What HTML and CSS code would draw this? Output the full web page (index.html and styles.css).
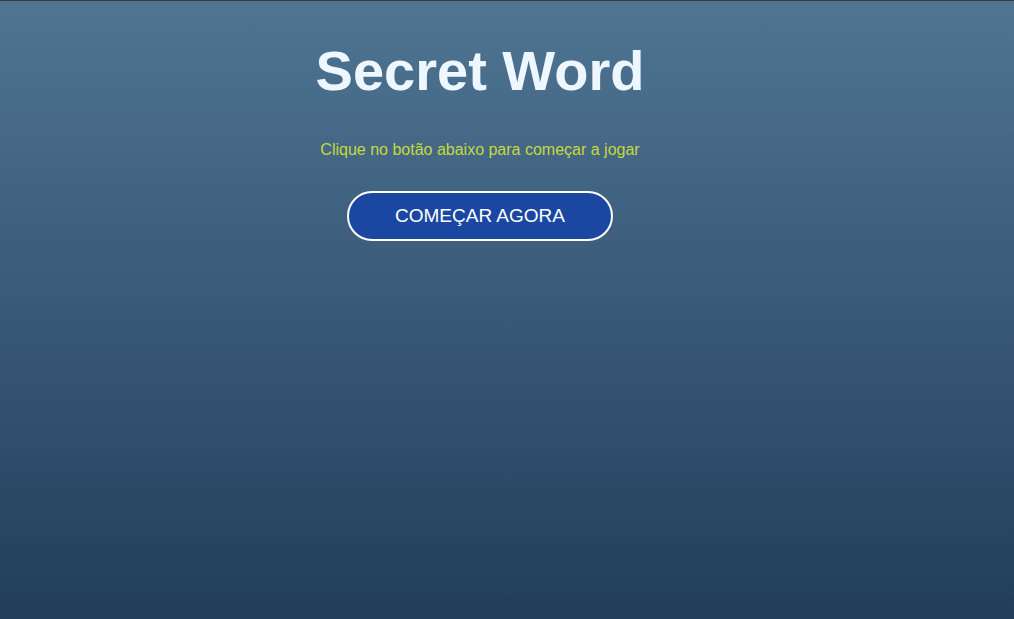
FILE: index.html
```html
<!DOCTYPE html>
<html lang="pt">
<head>
<meta charset="utf-8">
<title>Secret Word</title>
<link rel="stylesheet" href="styles.css">
</head>
<body>
<main class="app">
  <section class="start">
    <h1 class="title">Secret Word</h1>
    <p class="hint">Clique no botão abaixo para começar a jogar</p>
    <button class="start-btn">COMEÇAR AGORA</button>
  </section>
</main>
</body>
</html>
```

FILE: styles.css
```css
html, body {
  margin: 0;
  padding: 0;
  height: 100%;
}
body {
  border-top: 1px solid #3b3b3b;
  box-sizing: border-box;
  background: linear-gradient(to bottom, #4f7593 0%, #223d5c 100%);
  font-family: "Liberation Sans", Arial, sans-serif;
}
.app {
  width: 960px;
}
.start {
  display: flex;
  flex-direction: column;
  align-items: center;
  padding-top: 37px;
}
.title {
  margin: 0;
  font-size: 56px;
  font-weight: bold;
  color: #eef6ff;
}
.hint {
  margin: 38px 0 0;
  font-size: 16px;
  color: #c6d93c;
}
.start-btn {
  margin-top: 32px;
  font-family: "Liberation Sans", Arial, sans-serif;
  font-size: 19px;
  color: #ffffff;
  background: #1a47a1;
  border: 2px solid #ffffff;
  border-radius: 26px;
  padding: 12px 46px;
  line-height: normal;
  cursor: pointer;
}
```
